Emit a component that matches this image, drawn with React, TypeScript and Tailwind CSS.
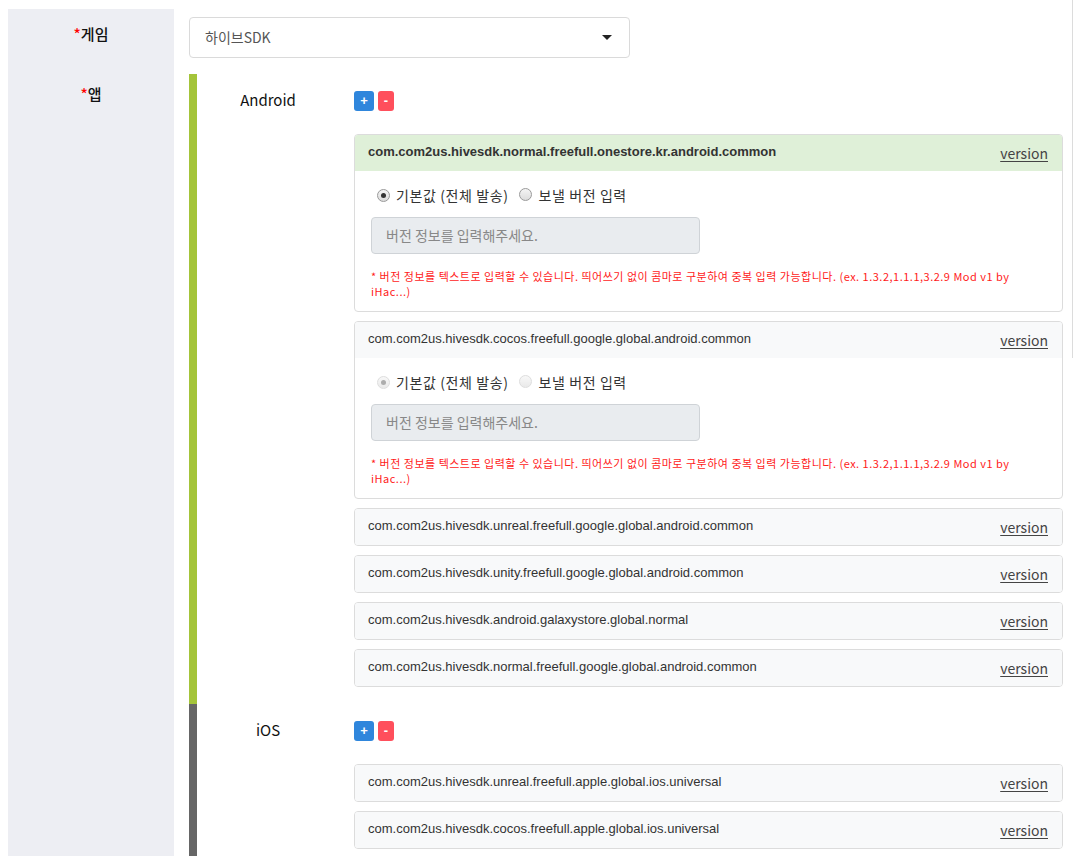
import React from 'react';

const KR = "font-['Noto_Sans_CJK_KR','Noto_Sans',sans-serif]";
const ARIAL = "font-['Liberation_Sans',Arial,sans-serif]";

interface AppItem {
  name: string;
  open?: boolean;
  active?: boolean;
  disabled?: boolean;
}

const android: AppItem[] = [
  { name: 'com.com2us.hivesdk.normal.freefull.onestore.kr.android.common', open: true, active: true },
  { name: 'com.com2us.hivesdk.cocos.freefull.google.global.android.common', open: true, disabled: true },
  { name: 'com.com2us.hivesdk.unreal.freefull.google.global.android.common' },
  { name: 'com.com2us.hivesdk.unity.freefull.google.global.android.common' },
  { name: 'com.com2us.hivesdk.android.galaxystore.global.normal' },
  { name: 'com.com2us.hivesdk.normal.freefull.google.global.android.common' },
];

const ios: AppItem[] = [
  { name: 'com.com2us.hivesdk.unreal.freefull.apple.global.ios.universal' },
  { name: 'com.com2us.hivesdk.cocos.freefull.apple.global.ios.universal' },
];

const Radio = ({ checked, disabled }: { checked?: boolean; disabled?: boolean }) => (
  <span
    className={`inline-flex w-[13px] h-[13px] rounded-full border items-center justify-center bg-gradient-to-b from-[#f4f4f4] to-[#dcdcdc] ${
      disabled ? 'border-[#c8c8c8] opacity-60' : 'border-[#9a9a9a]'
    }`}
  >
    {checked && <span className={`w-[5px] h-[5px] rounded-full ${disabled ? 'bg-[#777]' : 'bg-[#333]'}`} />}
  </span>
);

const AppCard = ({ item }: { item: AppItem }) => (
  <div className="border border-[#dcdcdc] rounded-[4px] mb-[9px] overflow-hidden bg-white">
    <div
      className={`flex items-center justify-between h-[36px] pl-[13px] pr-[14px] ${
        item.active ? 'bg-[#dff0d8]' : 'bg-[#f8f9fa]'
      }`}
    >
      <span className={`${ARIAL} text-[13px] text-[#333] ${item.active ? 'font-bold' : ''} -mt-[2px]`}>{item.name}</span>
      <span className={`${KR} text-[14px] text-[#444] underline underline-offset-2`}>version</span>
    </div>
    {item.open && (
      <div className="px-[16px] pt-[14px] pb-[12px]">
        <div className={`${KR} flex items-center text-[14px] text-[#333] h-[20px] ml-[6px] tracking-[0.6px]`}>
          <Radio checked disabled={item.disabled} />
          <span className="ml-[6px]">기본값 (전체 발송)</span>
          <span className="ml-[10px]"><Radio disabled={item.disabled} /></span>
          <span className="ml-[7px]">보낼 버전 입력</span>
        </div>
        <div
          className={`${KR} mt-[12px] w-[329px] h-[37px] border border-[#cfd3d7] rounded-[4px] bg-[#e9ecef] flex items-center px-[14px] text-[14px] text-[#888]`}
        >
          버전 정보를 입력해주세요.
        </div>
        <p className={`${KR} mt-[15px] text-[11px] leading-[15px] text-[#ff1a1a] tracking-[0.5px]`}>
          * 버전 정보를 텍스트로 입력할 수 있습니다. 띄어쓰기 없이 콤마로 구분하여 중복 입력 가능합니다. (ex. 1.3.2,1.1.1,3.2.9 Mod v1 by
          <br />
          iHac...)
        </p>
      </div>
    )}
  </div>
);

const PlatformGroup = ({ label, items, bar }: { label: string; items: AppItem[]; bar: string }) => (
  <div className={`flex border-l-[8px] ${bar} pt-[17px] pb-[8px]`}>
    <div className={`${KR} w-[142px] text-center text-[15px] text-[#111] h-[20px] leading-[20px] mt-[-1px]`}>{label}</div>
    <div className="ml-[15px] flex-1">
      <div className="flex gap-[4px] h-[20px]">
        <button className={`${ARIAL} w-[20px] h-[20px] rounded-[3px] bg-[#2f86dc] text-white text-[13px] font-bold leading-[20px]`}>+</button>
        <button className={`${ARIAL} w-[16px] h-[20px] rounded-[3px] bg-[#ff4f5c] text-white text-[13px] font-bold leading-[20px]`}>-</button>
      </div>
      <div className="mt-[23px]">
        {items.map((it) => (
          <AppCard key={it.name} item={it} />
        ))}
      </div>
    </div>
  </div>
);

export default function App() {
  return (
    <div className="bg-white h-[856px] overflow-hidden flex">
      <div className="flex-1 pl-[8px] pt-[9px]">
        <div className="grid grid-cols-[166px_1fr]">
          <div className="bg-[#edeef3] flex justify-center h-[65px] pt-[14px]">
            <span className={`${KR} text-[15px] font-medium text-[#111] leading-[22px] h-[22px]`}>
              <span className="text-[#ff0000]">*</span>게임
            </span>
          </div>
          <div className="pl-[15px] pt-[8px] pb-[8px]">
            <div className="w-[441px] h-[41px] border border-[#dadada] rounded-[4px] flex items-center justify-between pl-[15px] pr-[17px]">
              <span className={`${KR} text-[14px] text-[#555]`}>하이브SDK</span>
              <svg width="10" height="6" viewBox="0 0 10 6">
                <path d="M0 0 L10 0 L5 5 Z" fill="#222" />
              </svg>
            </div>
          </div>
          <div className="bg-[#edeef3] pt-[9px] flex justify-center h-[900px]">
            <span className={`${KR} text-[15px] font-medium text-[#111] leading-[22px] h-[22px]`}>
              <span className="text-[#ff0000]">*</span>앱
            </span>
          </div>
          <div className="pl-[15px] pr-[9px]">
            <PlatformGroup label="Android" items={android} bar="border-[#a4c43a]" />
            <PlatformGroup label="iOS" items={ios} bar="border-[#666666]" />
          </div>
        </div>
      </div>
      <div className="w-px h-[358px] bg-[#dcdcdc] mr-[2px]" />
    </div>
  );
}
